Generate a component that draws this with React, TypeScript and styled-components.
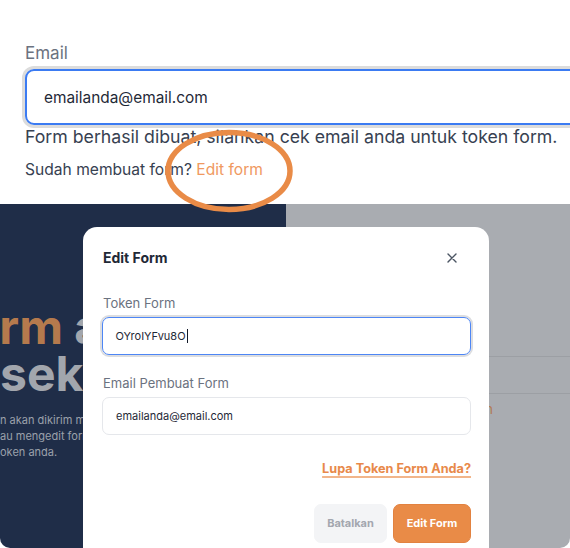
import React from "react";
import styled, { createGlobalStyle } from "styled-components";

const Global = createGlobalStyle`
  html, body { margin: 0; padding: 0; background: #ffffff; }
  body {
    font-family: Inter, "Noto Sans", "Liberation Sans", sans-serif;
    overflow: hidden;
    -webkit-font-smoothing: antialiased;
  }
  * { box-sizing: border-box; }
`;

const Page = styled.div`
  position: relative;
  width: 570px;
  height: 548px;
  overflow: hidden;
  display: flex;
  flex-direction: column;
  background: #ffffff;
`;

/* ---------- top (zoomed form) ---------- */
const Top = styled.section`
  height: 204px;
  flex-shrink: 0;
  padding: 43px 0 0 25px;
  display: flex;
  flex-direction: column;
`;

const TopLabel = styled.div`
  font-size: 17px;
  line-height: 20px;
  color: #6b7280;
`;

const TopField = styled.div`
  margin-top: 6px;
  height: 56px;
  width: 570px;
  flex-shrink: 0;
  border: 2px solid #3b7bf2;
  border-radius: 9px;
  box-shadow: 0 0 0 3px #dcdcdc;
  display: flex;
  align-items: center;
  padding-left: 17px;
  font-size: 15.4px;
  color: #1f2937;
`;

const TopMessage = styled.p`
  margin: 2px 0 0;
  font-size: 17.7px;
  line-height: 20px;
  color: #374151;
  white-space: nowrap;
`;

const TopHint = styled.p`
  margin: 13px 0 0;
  font-size: 15.6px;
  line-height: 20px;
  color: #374151;
  white-space: nowrap;
`;

const HintLink = styled.span`
  color: #f0995f;
`;

const Annotation = styled.svg`
  position: absolute;
  left: 160px;
  top: 125px;
  z-index: 5;
  pointer-events: none;
`;

/* ---------- bottom (page with modal) ---------- */
const Bottom = styled.section`
  position: relative;
  flex: 1;
  display: grid;
  grid-template-columns: 286px 1fr;
  overflow: hidden;
`;

const LeftPanel = styled.div`
  background: #1f2d48;
  border-bottom-left-radius: 10px;
  padding-top: 99px;
  overflow: hidden;
`;

const Heading = styled.h1`
  margin: 0;
  font-size: 48px;
  line-height: 47px;
  font-weight: 700;
  color: #a2a6ad;
  white-space: nowrap;
`;

const HeadLine = styled.span<{ $shift: number }>`
  display: block;
  margin-left: ${(p) => p.$shift}px;
`;

const Accent = styled.span`
  color: #b57a4d;
`;

const Blurb = styled.p`
  margin: 15px 0 0;
  font-size: 11px;
  line-height: 16px;
  color: #9ba1ab;
  white-space: nowrap;
`;

const BlurbLine = styled.span`
  display: block;
`;

const RightPanel = styled.div`
  background: #a9acb1;
  border-bottom-right-radius: 10px;
  padding-top: 152px;
  display: flex;
  flex-direction: column;
`;

const Divider = styled.div`
  height: 1px;
  background: #9c9fa4;
`;

const RowSpace = styled.div`
  height: 36px;
`;

const Note = styled.div`
  width: 207px;
  margin-top: 7px;
  text-align: right;
  font-size: 13px;
  line-height: 16px;
  color: #b27a52;
  white-space: nowrap;
`;

/* ---------- modal ---------- */
const Modal = styled.div`
  position: absolute;
  left: 83px;
  top: 23px;
  width: 406px;
  background: #ffffff;
  border-radius: 14px;
  padding: 22px 18px 24px 19px;
  display: flex;
  flex-direction: column;
  z-index: 2;
`;

const ModalHeader = styled.div`
  height: 18px;
  display: flex;
  align-items: center;
  justify-content: space-between;
`;

const ModalTitle = styled.h2`
  margin: 0 0 0 1px;
  font-size: 14px;
  line-height: 18px;
  font-weight: 700;
  color: #1f2937;
`;

const CloseButton = styled.button`
  width: 24px;
  height: 24px;
  margin-right: 7px;
  padding: 0;
  border: 0;
  background: transparent;
  display: flex;
  align-items: center;
  justify-content: center;
`;

const FieldLabel = styled.label<{ $gap: number }>`
  margin-top: ${(p) => p.$gap}px;
  margin-left: 1px;
  font-size: 13px;
  line-height: 16px;
  color: #6b7280;
`;

const FieldBox = styled.div<{ $focused?: boolean }>`
  margin-top: 5.5px;
  height: 38px;
  width: 100%;
  border-radius: 7px;
  border: ${(p) => (p.$focused ? "1.5px solid #4d86f5" : "1px solid #e5e7eb")};
  box-shadow: ${(p) => (p.$focused ? "0 0 0 2px #dcdde0" : "none")};
  padding-left: ${(p) => (p.$focused ? 12.5 : 13)}px;
  display: flex;
  align-items: center;
  font-size: 11px;
  color: #1f2937;
`;

const Caret = styled.span`
  display: inline-block;
  width: 1px;
  height: 14px;
  margin-left: 1px;
  background: #111827;
`;

const ForgotLink = styled.a`
  margin-top: 26px;
  align-self: flex-end;
  font-size: 12.7px;
  line-height: 16px;
  font-weight: 700;
  color: #e8894a;
  text-decoration: underline;
  text-decoration-color: #f2b58a;
  text-decoration-thickness: 2px;
  text-underline-offset: 3px;
`;

const Actions = styled.div`
  margin-top: 27px;
  display: flex;
  justify-content: flex-end;
  gap: 6px;
`;

const ActionButton = styled.button<{ $primary?: boolean }>`
  height: 39px;
  width: ${(p) => (p.$primary ? 78 : 73)}px;
  border-radius: 7px;
  border: 1px solid ${(p) => (p.$primary ? "#e28240" : "#f3f4f6")};
  background: ${(p) => (p.$primary ? "#e98b47" : "#f3f4f6")};
  color: ${(p) => (p.$primary ? "#ffffff" : "#a3a7af")};
  font-family: inherit;
  font-size: 11px;
  font-weight: 700;
  padding: 0;
`;

export default function App() {
  return (
    <>
      <Global />
      <Page>
        <Top>
          <TopLabel>Email</TopLabel>
          <TopField>emailanda@email.com</TopField>
          <TopMessage>
            Form berhasil dibuat, silahkan cek email anda untuk token form.
          </TopMessage>
          <TopHint>
            Sudah membuat form? <HintLink>Edit form</HintLink>
          </TopHint>
        </Top>

        <Annotation width="140" height="95" viewBox="0 0 140 95">
          <ellipse
            cx="69"
            cy="46"
            rx="61"
            ry="38.5"
            fill="none"
            stroke="#e98b47"
            strokeWidth="5.5"
          />
        </Annotation>

        <Bottom>
          <LeftPanel>
            <Heading>
              <HeadLine $shift={-57}>
                <Accent>Form</Accent> anda
              </HeadLine>
              <HeadLine $shift={0}>sekarang</HeadLine>
            </Heading>
            <Blurb>
              <BlurbLine>n akan dikirim melalui email</BlurbLine>
              <BlurbLine>au mengedit form anda</BlurbLine>
              <BlurbLine>oken anda.</BlurbLine>
            </Blurb>
          </LeftPanel>
          <RightPanel>
            <Divider />
            <RowSpace />
            <Divider />
            <Note>Lihat panduan</Note>
          </RightPanel>

          <Modal>
            <ModalHeader>
              <ModalTitle>Edit Form</ModalTitle>
              <CloseButton aria-label="Tutup">
                <svg width="10" height="10" viewBox="0 0 10 10">
                  <path
                    d="M1 1 L9 9 M9 1 L1 9"
                    stroke="#4b5563"
                    strokeWidth="1.4"
                    strokeLinecap="round"
                  />
                </svg>
              </CloseButton>
            </ModalHeader>

            <FieldLabel $gap={28}>Token Form</FieldLabel>
            <FieldBox $focused>
              OYroIYFvu8O
              <Caret />
            </FieldBox>

            <FieldLabel $gap={20.5}>Email Pembuat Form</FieldLabel>
            <FieldBox>emailanda@email.com</FieldBox>

            <ForgotLink>Lupa Token Form Anda?</ForgotLink>

            <Actions>
              <ActionButton>Batalkan</ActionButton>
              <ActionButton $primary>Edit Form</ActionButton>
            </Actions>
          </Modal>
        </Bottom>
      </Page>
    </>
  );
}
